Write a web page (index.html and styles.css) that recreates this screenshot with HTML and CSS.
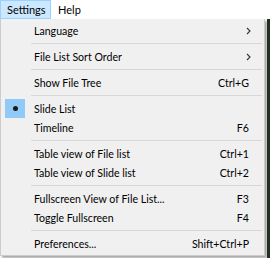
FILE: index.html
```html
<!DOCTYPE html>
<html lang="en">
<head>
  <meta charset="UTF-8" />
  <title>Settings menu</title>
  <link rel="stylesheet" href="styles.css">
</head>
<body>

  <div class="menubar">
    <span class="top-item open">Settings</span>
    <span class="top-item">Help</span>
  </div>

  <div class="stage">
    <div class="menu">
      <div class="item"><span class="label">Language</span><span class="arrow"><svg width="5" height="8" viewBox="0 0 5 8"><path d="M1 1 L4 4 L1 7" fill="none" stroke="#333" stroke-width="1.1"/></svg></span></div>
      <div class="sep"></div>
      <div class="item"><span class="label">File List Sort Order</span><span class="arrow"><svg width="5" height="8" viewBox="0 0 5 8"><path d="M1 1 L4 4 L1 7" fill="none" stroke="#333" stroke-width="1.1"/></svg></span></div>
      <div class="sep"></div>
      <div class="item"><span class="label">Show File Tree</span><span class="key">Ctrl+G</span></div>
      <div class="sep"></div>
      <div class="item"><span class="check"><span class="dot"></span></span><span class="label">Slide List</span></div>
      <div class="item"><span class="label">Timeline</span><span class="key">F6</span></div>
      <div class="sep"></div>
      <div class="item"><span class="label">Table view of File list</span><span class="key">Ctrl+1</span></div>
      <div class="item"><span class="label">Table view of Slide list</span><span class="key">Ctrl+2</span></div>
      <div class="sep"></div>
      <div class="item"><span class="label">Fullscreen View of File List...</span><span class="key">F3</span></div>
      <div class="item"><span class="label">Toggle Fullscreen</span><span class="key">F4</span></div>
      <div class="sep"></div>
      <div class="item"><span class="label">Preferences...</span><span class="key">Shift+Ctrl+P</span></div>
    </div>
    <div class="backdrop"></div>
  </div>

</body>
</html>
```

FILE: styles.css
```css
* {
  box-sizing: border-box;
}

body {
  margin: 0;
  background: #ffffff;
  font-family: 'Lato', 'Noto Sans', sans-serif;
  font-size: 10.6px;
  color: #000;
  width: 270px;
  height: 258px;
  overflow: hidden;
}

.menubar {
  display: flex;
  height: 19px;
  align-items: stretch;
  font-size: 11px;
}

.top-item {
  display: flex;
  align-items: center;
  padding: 0 6px;
  border: 1px solid transparent;
}

.top-item.open {
  background: #cce8ff;
  border-color: #99d1ff;
  width: 51px;
  padding-left: 6px;
}

.stage {
  display: flex;
  align-items: flex-start;
}

.menu {
  width: 265px;
  background: #f0f0f0;
  border: 1px solid #cccccc;
  border-top: none;
  padding: 2px;
  box-shadow: 2px 2px 2px rgba(0,0,0,0.35);
}

.item {
  display: flex;
  align-items: center;
  height: 19px;
  padding-left: 31px;
  padding-right: 13px;
  position: relative;
}

.label {
  flex: 1;
}

.key {
  text-align: right;
}

.arrow {
  display: flex;
  margin-right: -2px;
}

.sep {
  height: 1px;
  background: #d7d7d7;
  margin: 3px 0 3px 28px;
}

.check {
  position: absolute;
  left: 2px;
  top: 0;
  width: 20px;
  height: 19px;
  background: #91c9f7;
  display: flex;
  align-items: center;
  justify-content: center;
}

.dot {
  width: 5px;
  height: 5px;
  border-radius: 50%;
  background: #1a1a1a;
}

.backdrop {
  flex: 1;
  height: 239px;
  background: #1f2f22;
  margin-left: 2px;
}
```
